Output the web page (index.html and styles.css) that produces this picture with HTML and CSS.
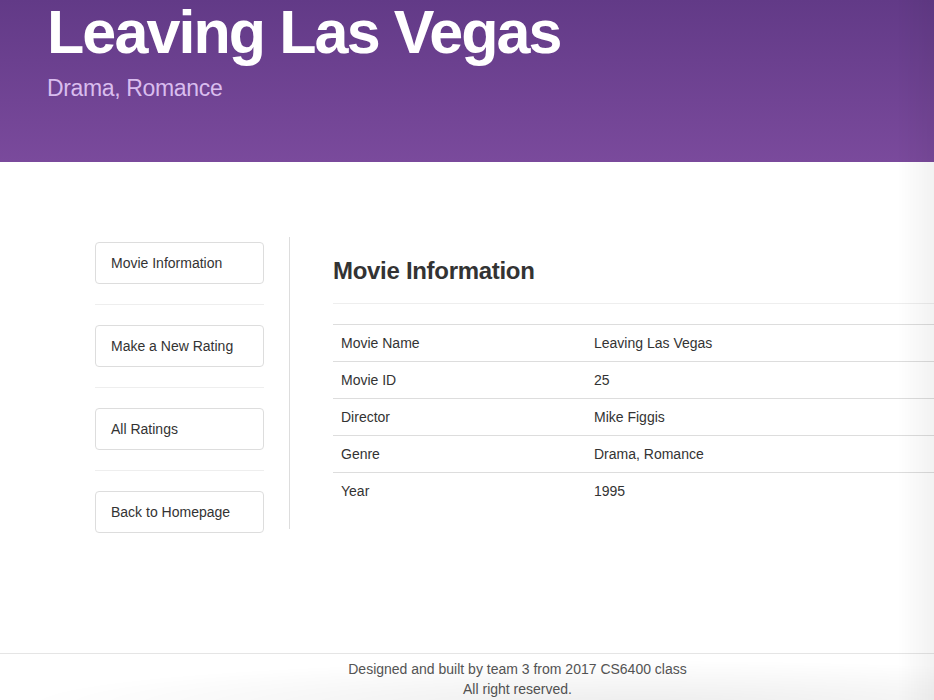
FILE: index.html
```html
<!DOCTYPE html>
<html lang="en">
<head>
<meta charset="utf-8">
<title>Leaving Las Vegas</title>
<link rel="stylesheet" href="styles.css">
</head>
<body>
<div class="page">
  <header class="hero">
    <h1 class="hero-title">Leaving Las Vegas</h1>
    <p class="hero-sub">Drama, Romance</p>
  </header>

  <div class="content">
    <nav class="sidebar">
      <a class="side-btn" href="#">Movie Information</a>
      <hr class="side-sep">
      <a class="side-btn" href="#">Make a New Rating</a>
      <hr class="side-sep">
      <a class="side-btn" href="#">All Ratings</a>
      <hr class="side-sep">
      <a class="side-btn" href="#">Back to Homepage</a>
    </nav>

    <main class="main">
      <div class="page-header">
        <h3 class="section-title">Movie Information</h3>
      </div>
      <table class="info-table">
        <tbody>
          <tr><td class="key">Movie Name</td><td>Leaving Las Vegas</td></tr>
          <tr><td class="key">Movie ID</td><td>25</td></tr>
          <tr><td class="key">Director</td><td>Mike Figgis</td></tr>
          <tr><td class="key">Genre</td><td>Drama, Romance</td></tr>
          <tr><td class="key">Year</td><td>1995</td></tr>
        </tbody>
      </table>
    </main>
  </div>

  <footer class="footer">
    <p class="footer-line">Designed and built by team 3 from 2017 CS6400 class</p>
    <p class="footer-line">All right reserved.</p>
  </footer>
</div>
<div class="shade"></div>
</body>
</html>
```

FILE: styles.css
```css
html, body {
  margin: 0;
  padding: 0;
  overflow: hidden;
  background: #fff;
}

body {
  font-family: "Liberation Sans", Arial, Helvetica, sans-serif;
  font-size: 14px;
  line-height: 20px;
  color: #333;
}

.page {
  width: 1035px;
}

.hero {
  height: 162px;
  box-sizing: border-box;
  padding: 0 0 0 46px;
  background: linear-gradient(to bottom, #623a87 0%, #7a4a9c 100%);
  color: #fff;
}

.hero-title {
  margin: 0 0 0 1px;
  font-size: 61px;
  line-height: 64px;
  font-weight: bold;
  letter-spacing: -1.9px;
}

.hero-sub {
  margin: 9px 0 0 1px;
  font-size: 23px;
  line-height: 30px;
  letter-spacing: -0.35px;
  color: #d9bdee;
}

.content {
  display: flex;
  align-items: flex-start;
  padding: 75px 0 120px 95px;
}

.sidebar {
  width: 169px;
  margin-top: 5px;
  margin-right: 25px;
  display: flex;
  flex-direction: column;
}

.side-btn {
  display: block;
  padding: 10px 15px;
  border: 1px solid #ddd;
  border-radius: 4px;
  color: #333;
  text-decoration: none;
  font-size: 14px;
  line-height: 20px;
}

.side-sep {
  margin: 20px 0;
  border: 0;
  border-top: 1px solid #eee;
  height: 0;
}

.main {
  flex: 1;
  border-left: 1px solid #ddd;
  padding-left: 43px;
}

.page-header {
  margin: 0 0 20px;
  padding-bottom: 9px;
  border-bottom: 1px solid #eee;
}

.section-title {
  margin: 21px 0 10px;
  font-size: 24px;
  line-height: 26.4px;
  font-weight: bold;
  letter-spacing: -0.3px;
  color: #333;
}

.info-table {
  width: 100%;
  border-collapse: collapse;
  border-spacing: 0;
  margin-bottom: 20px;
}

.info-table td {
  padding: 8px;
  line-height: 20px;
  border-top: 1px solid #ddd;
  vertical-align: top;
  text-align: left;
}

.info-table td.key {
  width: 237px;
}

.footer {
  border-top: 1px solid #e5e5e5;
  padding-top: 5px;
  text-align: center;
  color: #555;
}

.footer-line {
  margin: 0;
  font-size: 14px;
  line-height: 20px;
}

.shade {
  position: fixed;
  left: 0;
  top: 0;
  right: 0;
  bottom: 0;
  pointer-events: none;
  background:
    linear-gradient(to left, rgba(0,0,0,0.05), rgba(0,0,0,0) 36px),
    radial-gradient(ellipse 620px 45px at 640px 705px, rgba(0,0,0,0.07), rgba(0,0,0,0));
}
```
